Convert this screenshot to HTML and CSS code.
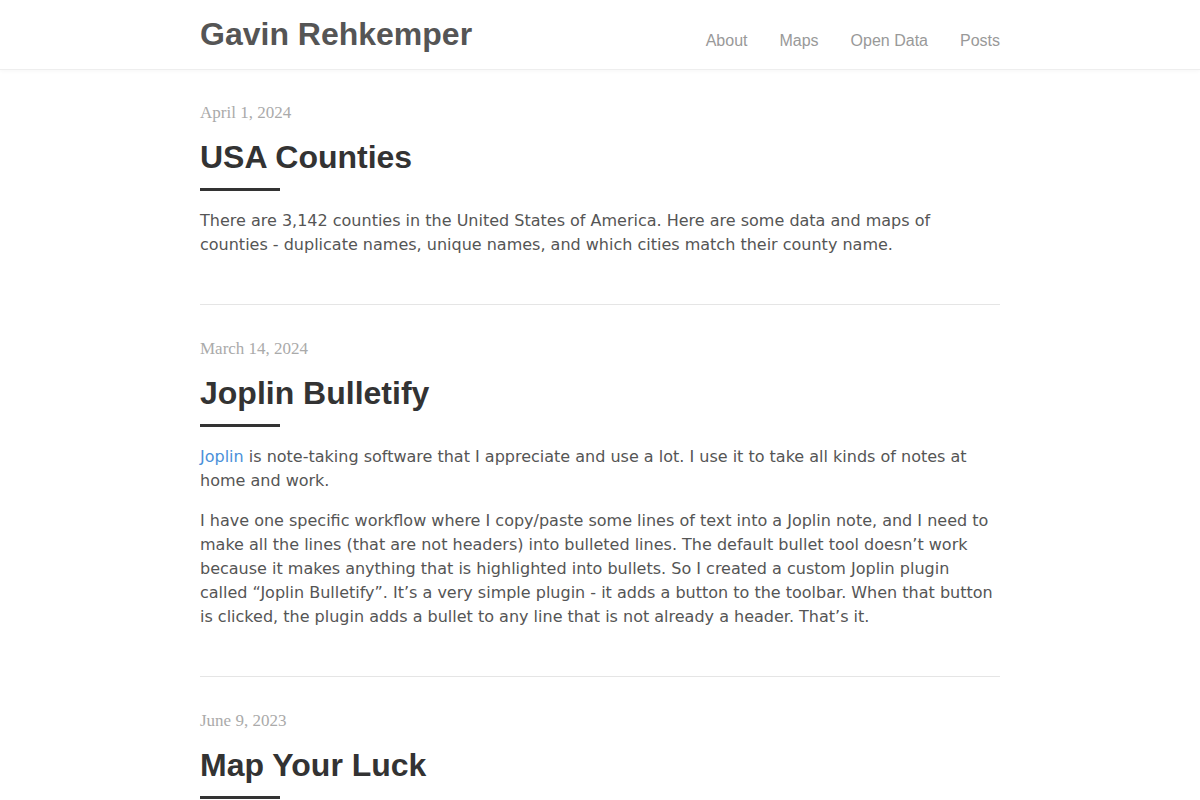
FILE: index.html
```html
<!DOCTYPE html>
<html lang="en">
<head>
    <meta charset="UTF-8">
    <meta name="viewport" content="width=device-width, initial-scale=1.0">
    <title>Gavin Rehkemper</title>
    <link rel="stylesheet" href="styles.css">
</head>
<body>
    <header class="site-header">
        <div class="wrap header-inner">
            <a class="site-title" href="#">Gavin Rehkemper</a>
            <nav class="site-nav">
                <a href="#">About</a>
                <a href="#">Maps</a>
                <a href="#">Open Data</a>
                <a href="#">Posts</a>
            </nav>
        </div>
    </header>

    <main class="wrap">
        <article class="post">
            <div class="post-date">April 1, 2024</div>
            <h2 class="post-title">USA Counties</h2>
            <p>There are 3,142 counties in the United States of America. Here are some data and maps of counties - duplicate names, unique names, and which cities match their county name.</p>
        </article>

        <article class="post">
            <div class="post-date">March 14, 2024</div>
            <h2 class="post-title">Joplin Bulletify</h2>
            <p><a href="#">Joplin</a> is note-taking software that I appreciate and use a lot. I use it to take all kinds of notes at home and work.</p>
            <p>I have one specific workflow where I copy/paste some lines of text into a Joplin note, and I need to make all the lines (that are not headers) into bulleted lines. The default bullet tool doesn&rsquo;t work because it makes anything that is highlighted into bullets. So I created a custom Joplin plugin called &ldquo;Joplin Bulletify&rdquo;. It&rsquo;s a very simple plugin - it adds a button to the toolbar. When that button is clicked, the plugin adds a bullet to any line that is not already a header. That&rsquo;s it.</p>
        </article>

        <article class="post">
            <div class="post-date">June 9, 2023</div>
            <h2 class="post-title">Map Your Luck</h2>
            <p>A little map game about luck and chance.</p>
        </article>
    </main>
</body>
</html>
```

FILE: styles.css
```css
body {
    margin: 0;
    font-family: "DejaVu Sans", sans-serif;
    font-size: 16px;
    line-height: 24px;
    color: #555;
    background: #fff;
}
a {
    text-decoration: none;
}
.wrap {
    max-width: 800px;
    margin: 0 auto;
}
.site-header {
    height: 69px;
    border-bottom: 1px solid #eee;
    box-shadow: 0 1px 4px rgba(0, 0, 0, 0.04);
}
.header-inner {
    display: flex;
    justify-content: space-between;
    align-items: center;
    height: 100%;
}
.site-title {
    font-family: "Liberation Sans", Arial, sans-serif;
    font-size: 32px;
    font-weight: bold;
    color: #555;
    line-height: 38px;
    margin-top: -1px;
}
.site-nav {
    display: flex;
    gap: 32px;
    margin-top: 12px;
}
.site-nav a {
    font-family: "Liberation Sans", Arial, sans-serif;
    font-size: 16px;
    color: #999;
}
.post {
    padding: 32px 0 31px;
    border-bottom: 1px solid #e5e5e5;
}
.post:first-child {
    padding-top: 31px;
}
.post-date {
    font-family: "Liberation Serif", "Times New Roman", serif;
    font-size: 17px;
    color: #aaa;
}
.post-title {
    font-family: "Liberation Sans", Arial, sans-serif;
    font-size: 32px;
    line-height: 38px;
    font-weight: bold;
    color: #333;
    margin: 13px 0 0;
}
.post-title::after {
    content: "";
    display: block;
    width: 80px;
    height: 3px;
    margin: 12px 0 18px;
    background: #333;
}
.post p {
    margin: 0 0 16px;
}
.post p a {
    color: #4a90d9;
}
```
